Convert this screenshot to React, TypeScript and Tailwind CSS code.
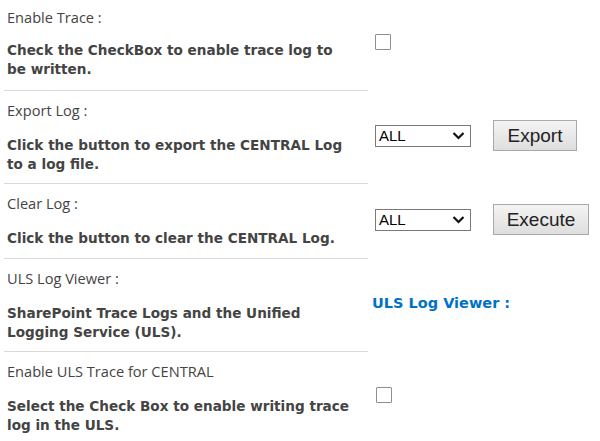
import React from "react";

const labelCls = "text-[14.6px] leading-[20px] text-[#444] font-['Open_Sans',sans-serif]";
const descBase = "text-[13.6px] leading-[19px] font-bold text-[#444] font-['DejaVu_Sans',sans-serif]";

function Checkbox() {
  return <span className="inline-block w-[16px] h-[16px] border border-[#8f8f8f] rounded-[1px] bg-white align-middle" />;
}

function Select() {
  return (
    <div className="inline-flex items-center justify-between w-[96px] h-[22px] border border-[#7a7a7a] bg-white pl-[3px] pr-[5px] font-['Liberation_Sans',Arial,sans-serif] text-[15px] text-black align-middle">
      <span className="leading-none">ALL</span>
      <svg width="13" height="9" viewBox="0 0 13 9" fill="none">
        <path d="M1.5 2 L6.5 7 L11.5 2" stroke="#111" strokeWidth="2.2" />
      </svg>
    </div>
  );
}

function Btn({ children, w }: { children: React.ReactNode; w: string }) {
  return (
    <button
      className={`${w} h-[31px] border border-[#a9a9a9] bg-gradient-to-b from-[#f4f4f4] to-[#dedede] font-['Liberation_Sans',Arial,sans-serif] text-[19px] text-[#222] leading-none align-middle`}
    >
      {children}
    </button>
  );
}

function Row({
  label,
  desc,
  right,
  last,
  first,
  single,
}: {
  label: string;
  desc: React.ReactNode;
  right: React.ReactNode;
  last?: boolean;
  first?: boolean;
  single?: boolean;
}) {
  const pad = first ? "pt-[7px] pb-[11px]" : single ? "pt-[9px] pb-[10px]" : "pt-[9px] pb-[9px]";
  return (
    <div className="flex">
      <div className={`w-[364px] pl-[3px] ${pad} ${last ? "" : "border-b border-[#d9d9d9]"}`}>
        <div className={labelCls}>{label}</div>
        <div className={`${first ? "mt-[14px]" : "mt-[16px]"} ${descBase}`}>{desc}</div>
      </div>
      <div className="flex-1 flex items-center pb-[4px]">{right}</div>
    </div>
  );
}

export default function App() {
  return (
    <div className="w-[600px] h-[441px] overflow-hidden bg-white pl-[4px]">
      <Row
        first
        label="Enable Trace :"
        desc={<>Check the CheckBox to enable trace log to<br />be written.</>}
        right={<div className="pl-[7px] pb-[6px]"><Checkbox /></div>}
      />
      <Row
        label="Export Log :"
        desc={<>Click the button to export the CENTRAL Log<br />to a log file.</>}
        right={
          <div className="pl-[7px] flex items-center gap-[22px]">
            <Select />
            <Btn w="w-[84px]">Export</Btn>
          </div>
        }
      />
      <Row
        single
        label="Clear Log :"
        desc={<>Click the button to clear the CENTRAL Log.</>}
        right={
          <div className="pl-[7px] flex items-center gap-[22px]">
            <Select />
            <Btn w="w-[96px]">Execute</Btn>
          </div>
        }
      />
      <Row
        label="ULS Log Viewer :"
        desc={<>SharePoint Trace Logs and the Unified<br />Logging Service (ULS).</>}
        right={
          <a className="pl-[4px] text-[14.5px] font-bold text-[#0072c6] font-['DejaVu_Sans',sans-serif]">
            ULS Log Viewer :
          </a>
        }
      />
      <Row
        label="Enable ULS Trace for CENTRAL"
        desc={<>Select the Check Box to enable writing trace<br />log in the ULS.</>}
        right={<div className="pl-[8px] pb-[6px]"><Checkbox /></div>}
        last
      />
    </div>
  );
}
